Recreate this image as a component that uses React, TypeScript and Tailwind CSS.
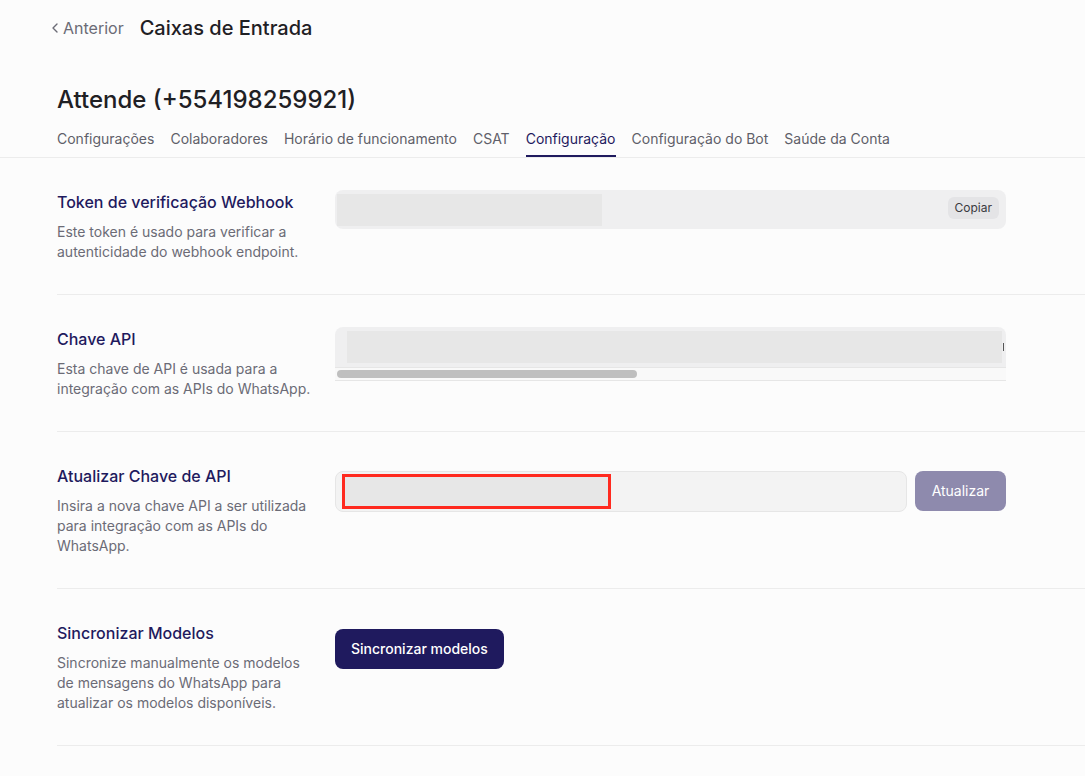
import { ChevronLeft } from 'lucide-react'

const tabs = [
  'Configurações',
  'Colaboradores',
  'Horário de funcionamento',
  'CSAT',
  'Configuração',
  'Configuração do Bot',
  'Saúde da Conta',
]

function Row({ title, desc, children }: { title: string; desc: string; children: React.ReactNode }) {
  return (
    <div className="flex border-b border-[#ececec] py-8">
      <div className="w-[278px] shrink-0 pr-6">
        <h3 className="text-base leading-6 font-medium text-[#1f1a5e]">{title}</h3>
        <p className="mt-2 text-sm leading-5 text-[#6b6b76]">{desc}</p>
      </div>
      <div className="w-[671px]">{children}</div>
    </div>
  )
}

export default function App() {
  return (
    <div className="min-h-screen w-full bg-[#fcfcfc] text-[#1f2024]" style={{ fontFamily: 'Inter, "Noto Sans", sans-serif' }}>
      <header className="flex h-14 items-center pl-[47px]">
        <button className="flex items-center text-base text-[#6b6b76]">
          <ChevronLeft size={16} strokeWidth={2} />
          Anterior
        </button>
        <h1 className="ml-4 text-xl font-medium text-[#1f2024]">Caixas de Entrada</h1>
      </header>

      <div className="border-b border-[#ececec] pt-[28px]">
        <h2 className="px-[57px] text-2xl leading-8 font-medium text-[#1f2024]">Attende (+554198259921)</h2>
        <nav className="mt-[13px] flex gap-4 px-[57px] text-sm">
          {tabs.map((t) => (
            <div
              key={t}
              className={
                t === 'Configuração'
                  ? 'border-b-2 border-[#1f1a5e] pb-[6px] text-[#1f1a5e]'
                  : 'border-b-2 border-transparent pb-[6px] text-[#5f5f69]'
              }
            >
              {t}
            </div>
          ))}
        </nav>
      </div>

      <div className="pl-[57px]">
        <Row title="Token de verificação Webhook" desc="Este token é usado para verificar a autenticidade do webhook endpoint.">
          <div className="flex h-[39px] items-center justify-between rounded-lg bg-[#efeff0] pl-[2px] pr-[7px]">
            <div className="h-[32px] w-[265px] bg-[#e7e7e7]" />
            <button className="mb-[3px] rounded-md bg-[#e4e4e6] px-[7px] py-[3px] text-xs text-[#3a3a40]">Copiar</button>
          </div>
        </Row>

        <Row title="Chave API" desc="Esta chave de API é usada para a integração com as APIs do WhatsApp.">
          <div className="overflow-hidden">
            <div className="flex h-[40px] items-center rounded-t-lg bg-[#efeff0] pl-[12px] pr-[2px]">
              <div className="h-[32px] flex-1 bg-[#e7e7e7]" />
              <div className="ml-px h-[8px] w-px bg-[#555]" />
            </div>
            <div className="flex h-[14px] items-center border-y border-[#e6e6e6] bg-[#f9f9f9] px-[2px]">
              <div className="h-[8px] w-[300px] rounded-full bg-[#bfbfbf]" />
            </div>
          </div>
        </Row>

        <Row title="Atualizar Chave de API" desc="Insira a nova chave API a ser utilizada para integração com as APIs do WhatsApp.">
          <div className="mt-[7px] flex gap-2">
            <div className="flex h-[41px] flex-1 items-center rounded-lg border border-[#e6e6e6] bg-[#f3f3f3] pl-[6px]">
              <div className="h-[35px] w-[269px] border-[3px] border-[#ff2a1f] bg-[#e7e7e7]" />
            </div>
            <button className="h-[40px] w-[91px] rounded-lg bg-[#8e8aad] text-sm text-white">Atualizar</button>
          </div>
        </Row>

        <Row title="Sincronizar Modelos" desc="Sincronize manualmente os modelos de mensagens do WhatsApp para atualizar os modelos disponíveis.">
          <button className="mt-[8px] h-[40px] rounded-lg bg-[#1f1a5e] px-4 text-sm font-medium text-white">Sincronizar modelos</button>
        </Row>
      </div>
    </div>
  )
}
